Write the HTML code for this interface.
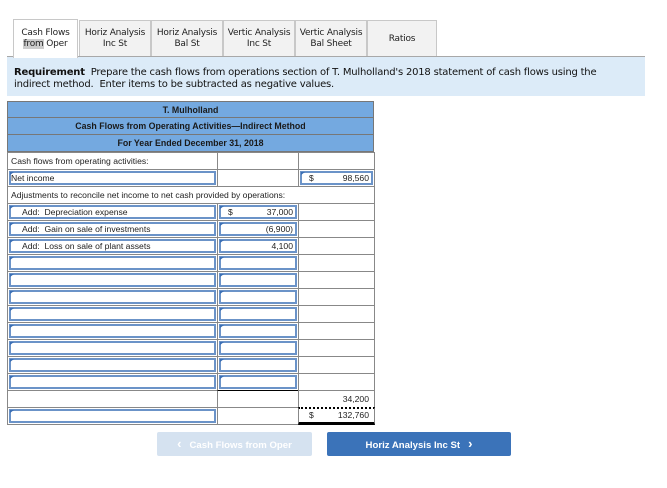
<!DOCTYPE html>
<html><head><meta charset="utf-8"><style>
*{box-sizing:border-box;margin:0;padding:0}
body{width:667px;height:488px;background:#fff;position:relative;font-family:"Liberation Sans",Arial,sans-serif;overflow:hidden}
.tab{position:absolute;top:20px;height:37px;border:1px solid #c8c8c8;border-bottom:none;background:#f2f2f2;font-family:"DejaVu Sans",Verdana,sans-serif;font-size:9px;color:#222;text-align:center;display:flex;align-items:center;justify-content:center;line-height:11px;letter-spacing:-0.2px}
.tab.act{background:#fff;top:19px;height:39px;z-index:2}
.req{position:absolute;left:7px;top:56px;width:638px;height:40px;background:#dcebf8;border-top:1px solid #a8a8a8;font-family:"DejaVu Sans",Verdana,sans-serif;font-size:10px;color:#111;padding:10px 0 0 7px;line-height:12px;letter-spacing:-0.2px}
.c{position:absolute;font-size:8.6px;color:#222;white-space:nowrap;overflow:hidden}
.hd{position:absolute;left:7px;width:367px;height:17px;background:#74a9e0;border:1px solid #777;border-top:none;font-size:8.8px;font-weight:bold;color:#1a1a1a;text-align:center;line-height:16px}
.cell{position:absolute;height:18px;border:1px solid #888;background:#fff;line-height:16px;padding:0 3px}
.in{position:absolute;height:18px;border:1px solid #888;background:#fff}
.in::before{content:"";position:absolute;left:1px;top:1px;right:1px;bottom:1px;border:2px solid #6b93c8}
.in::after{content:"";position:absolute;left:2px;top:2px;border-left:4px solid #3b6fb5;border-bottom:3px solid transparent}
.in span,.cell span{position:relative;z-index:1}
.btn{position:absolute;top:432px;height:24px;border-radius:2px;font-size:9.6px;font-weight:bold;color:#fff;text-align:center;line-height:24px}
</style></head><body>
<div class="tab act" style="left:13px;width:65px"><span>Cash Flows<br><span style="background:#ccc">from</span> Oper</span></div>
<div class="tab" style="left:79px;width:72px">Horiz Analysis<br>Inc St</div>
<div class="tab" style="left:151px;width:72px">Horiz Analysis<br>Bal St</div>
<div class="tab" style="left:223px;width:72px">Vertic Analysis<br>Inc St</div>
<div class="tab" style="left:295px;width:72px">Vertic Analysis<br>Bal Sheet</div>
<div class="tab" style="left:367px;width:70px">Ratios</div>
<div class="req"><b>Requirement</b>&nbsp; Prepare the cash flows from operations section of T. Mulholland's 2018 statement of cash flows using the<br>indirect method.&nbsp; Enter items to be subtracted as negative values.</div>

<div class="hd" style="top:101px;border-top:1px solid #777">T. Mulholland</div>
<div class="hd" style="top:118px">Cash Flows from Operating Activities—Indirect Method</div>
<div class="hd" style="top:135px">For Year Ended December 31, 2018</div>

<div class="c" style="left:7px;top:152px;width:368px;height:273px;border:1px solid #777;background:#fff"></div>
<div class="cell c" style="left:7px;top:152px;width:211px">Cash flows from operating activities:</div>
<div class="cell c" style="left:217px;top:152px;width:82px"></div>
<div class="cell c" style="left:298px;top:152px;width:77px"></div>
<div class="in c" style="left:7px;top:169px;width:211px;line-height:16px;padding-left:3px"><span>Net income</span></div>
<div class="cell c" style="left:217px;top:169px;width:82px"></div>
<div class="in c" style="left:298px;top:169px;width:77px;line-height:16px"><span style="position:absolute;left:10px">$</span><span style="position:absolute;right:5px">98,560</span></div>
<div class="cell c" style="left:7px;top:186px;width:368px">Adjustments to reconcile net income to net cash provided by operations:</div>
<div class="in c" style="left:7px;top:203px;width:211px;line-height:16px;padding-left:14px"><span>Add:&nbsp; Depreciation expense</span></div>
<div class="in c" style="left:217px;top:203px;width:82px;line-height:16px"><span style="position:absolute;left:10px">$</span><span style="position:absolute;right:5px">37,000</span></div>
<div class="cell c" style="left:298px;top:203px;width:77px"></div>
<div class="in c" style="left:7px;top:220px;width:211px;line-height:16px;padding-left:14px"><span>Add:&nbsp; Gain on sale of investments</span></div>
<div class="in c" style="left:217px;top:220px;width:82px;line-height:16px"><span style="position:absolute;right:5px">(6,900)</span></div>
<div class="cell c" style="left:298px;top:220px;width:77px"></div>
<div class="in c" style="left:7px;top:237px;width:211px;line-height:16px;padding-left:14px"><span>Add:&nbsp; Loss on sale of plant assets</span></div>
<div class="in c" style="left:217px;top:237px;width:82px;line-height:16px"><span style="position:absolute;right:5px">4,100</span></div>
<div class="cell c" style="left:298px;top:237px;width:77px"></div>
<div class="in" style="left:7px;top:254px;width:211px"></div><div class="in" style="left:217px;top:254px;width:82px"></div><div class="cell" style="left:298px;top:254px;width:77px"></div>
<div class="in" style="left:7px;top:271px;width:211px"></div><div class="in" style="left:217px;top:271px;width:82px"></div><div class="cell" style="left:298px;top:271px;width:77px"></div>
<div class="in" style="left:7px;top:288px;width:211px"></div><div class="in" style="left:217px;top:288px;width:82px"></div><div class="cell" style="left:298px;top:288px;width:77px"></div>
<div class="in" style="left:7px;top:305px;width:211px"></div><div class="in" style="left:217px;top:305px;width:82px"></div><div class="cell" style="left:298px;top:305px;width:77px"></div>
<div class="in" style="left:7px;top:322px;width:211px"></div><div class="in" style="left:217px;top:322px;width:82px"></div><div class="cell" style="left:298px;top:322px;width:77px"></div>
<div class="in" style="left:7px;top:339px;width:211px"></div><div class="in" style="left:217px;top:339px;width:82px"></div><div class="cell" style="left:298px;top:339px;width:77px"></div>
<div class="in" style="left:7px;top:356px;width:211px"></div><div class="in" style="left:217px;top:356px;width:82px"></div><div class="cell" style="left:298px;top:356px;width:77px"></div>
<div class="in" style="left:7px;top:373px;width:211px"></div><div class="in" style="left:217px;top:373px;width:82px"></div><div class="cell" style="left:298px;top:373px;width:77px"></div>
<div class="cell" style="left:7px;top:390px;width:211px"></div>
<div class="cell" style="left:217px;top:390px;width:82px;border-top:1px solid #000"></div>
<div class="cell c" style="left:298px;top:390px;width:77px;text-align:right;padding-right:5px">34,200</div>
<div class="in" style="left:7px;top:407px;width:211px"></div>
<div class="cell" style="left:217px;top:407px;width:82px"></div>
<div class="cell c" style="left:298px;top:407px;width:77px;border-top:2px dotted #000;border-bottom:3px solid #000;line-height:13px"><span style="position:absolute;left:10px">$</span><span style="position:absolute;right:5px">132,760</span></div>

<div class="btn" style="left:157px;width:155px;background:#d5e2f0;color:#fff"><span style="font-size:13px">&lsaquo;</span>&nbsp;&nbsp; Cash Flows from Oper</div>
<div class="btn" style="left:327px;width:184px;background:#3b73b9">Horiz Analysis Inc St &nbsp;&nbsp;<span style="font-size:13px">&rsaquo;</span></div>
</body></html>
